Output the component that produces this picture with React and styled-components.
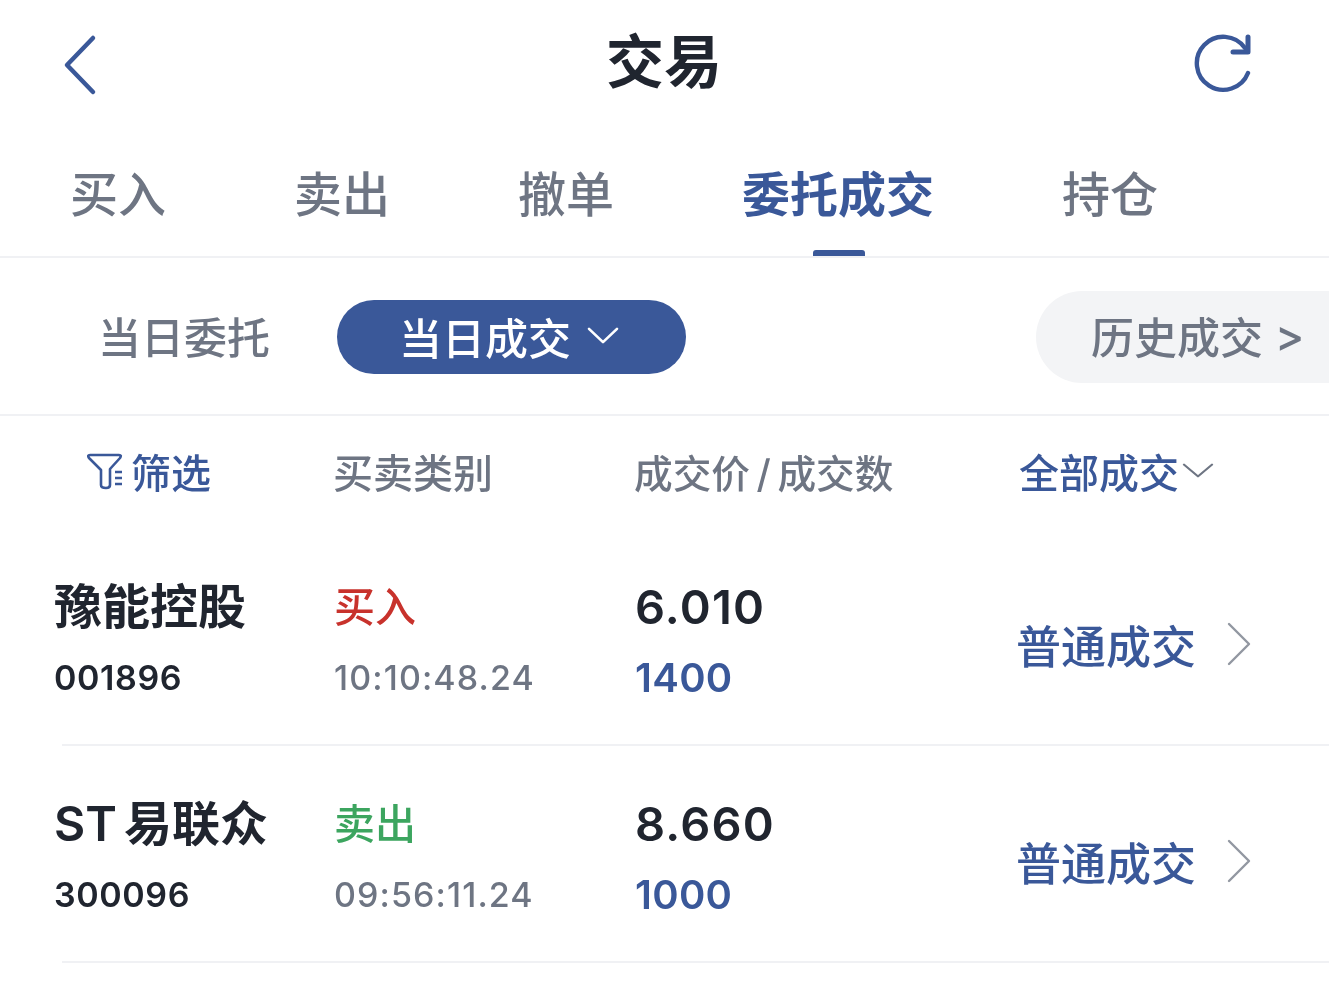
import React from 'react';

// Styled Components
import styled, { createGlobalStyle } from 'styled-components';

const BLUE = '#3a5899';
const DARK = '#20252f';
const GRAY = '#6e7583';

const trades = [
    { name: '豫能控股', code: '001896', side: '买入', buy: true, time: '10:10:48.24', price: '6.010', qty: '1400', kind: '普通成交' },
    { name: 'ST 易联众', code: '300096', side: '卖出', buy: false, time: '09:56:11.24', price: '8.660', qty: '1000', kind: '普通成交' },
];

const tabs = ['买入', '卖出', '撤单', '委托成交', '持仓'];

const Chevron = ({ size = 32, height = 18, color = 'currentColor', width = 3 }) => (
    <svg width={size} height={height} viewBox="0 0 32 18" fill="none" preserveAspectRatio="none">
        <path d="M2 2 L16 16 L30 2" stroke={color} strokeWidth={width} strokeLinecap="round" strokeLinejoin="round" />
    </svg>
);

const App = () => {
    return (
        <Page>
            <GlobalStyle />
            <NavBar>
                <svg width="36" height="62" viewBox="0 0 36 62" fill="none">
                    <path d="M31 4 L5 31 L31 58" stroke={BLUE} strokeWidth="4.5" strokeLinecap="round" strokeLinejoin="round" />
                </svg>
                <Title>交易</Title>
                <RefreshIcon width="60" height="62" viewBox="0 0 60 62" fill="none">
                    <path d="M55 41 A26.5 26.5 0 1 1 52 16" stroke={BLUE} strokeWidth="4.4" strokeLinecap="round" />
                    <path d="M55 5 V20 H40" stroke={BLUE} strokeWidth="5" strokeLinecap="round" strokeLinejoin="round" />
                </RefreshIcon>
            </NavBar>

            <TabBar>
                {tabs.map((tab) => (
                    <Tab key={tab} $active={tab === '委托成交'}>{tab}</Tab>
                ))}
            </TabBar>

            <SubBar>
                <SubLabel>当日委托</SubLabel>
                <ActivePill>
                    当日成交
                    <Chevron size={32} height={17} color="#fff" width={2.6} />
                </ActivePill>
                <HistoryPill>
                    历史成交<Arrow>&gt;</Arrow>
                </HistoryPill>
            </SubBar>

            <HeaderRow>
                <FilterCell>
                    <svg width="38" height="38" viewBox="0 0 38 38" fill="none">
                        <path d="M3 3 H32 Q35 3 33 6 L23 17 V33 Q23 36 19 36 Q14 36 14 33 V18 L2 6 Q0 3 3 3 Z" stroke={BLUE} strokeWidth="2.6" strokeLinejoin="round" />
                        <path d="M28 20 H35 M28 26 H35 M28 32 H35" stroke={BLUE} strokeWidth="2.4" />
                    </svg>
                    筛选
                </FilterCell>
                <HeadCell>买卖类别</HeadCell>
                <PriceHead>成交价<Slash>/</Slash>成交数</PriceHead>
                <AllCell>
                    全部成交
                    <Chevron size={32} height={15} color={GRAY} width={2.4} />
                </AllCell>
            </HeaderRow>

            {trades.map((t) => (
                <TradeRow key={t.code}>
                    <Cell>
                        <StockName>{t.name}</StockName>
                        <StockCode>{t.code}</StockCode>
                    </Cell>
                    <Cell>
                        <Side $buy={t.buy}>{t.side}</Side>
                        <Time>{t.time}</Time>
                    </Cell>
                    <Cell>
                        <Price>{t.price}</Price>
                        <Qty>{t.qty}</Qty>
                    </Cell>
                    <KindCell>
                        <Kind>{t.kind}</Kind>
                        <svg width="28" height="44" viewBox="0 0 28 44" fill="none">
                            <path d="M5 2 L25 22 L5 42" stroke="#9297a1" strokeWidth="2.4" strokeLinecap="round" strokeLinejoin="round" />
                        </svg>
                    </KindCell>
                </TradeRow>
            ))}
        </Page>
    );
};

const GlobalStyle = createGlobalStyle`
  html, body {
    margin: 0;
    padding: 0;
    background: #fff;
  }

  body {
    font-family: Inter, "Noto Sans CJK SC", sans-serif;
    overflow: hidden;
  }
`;

const Page = styled.div`
  width: 1329px;
  height: 996px;
  overflow: hidden;
  background: #fff;
  filter: blur(0.5px);
`;

const NavBar = styled.div`
  height: 130px;
  display: flex;
  align-items: center;
  justify-content: space-between;
  padding: 0 76px 0 62px;
  box-sizing: border-box;
`;

const RefreshIcon = styled.svg`
  margin-top: -4px;
`;

const Title = styled.div`
  font-size: 58px;
  font-weight: 600;
  color: ${DARK};
  line-height: 1;
  margin: -6px 0 0 37px;
`;

const TabBar = styled.div`
  height: 128px;
  box-sizing: border-box;
  display: flex;
  gap: 128px;
  padding: 39px 0 0 70px;
  border-bottom: 2px solid #f0f1f4;
`;

const Tab = styled.div`
  position: relative;
  height: 87px;
  font-size: 48px;
  line-height: 52px;
  font-weight: ${(p) => (p.$active ? 600 : 500)};
  color: ${(p) => (p.$active ? BLUE : GRAY)};

  &::after {
    content: '';
    display: ${(p) => (p.$active ? 'block' : 'none')};
    position: absolute;
    left: 71px;
    bottom: 0;
    width: 52px;
    height: 6px;
    border-radius: 3px 3px 0 0;
    background: ${BLUE};
  }
`;

const SubBar = styled.div`
  height: 158px;
  box-sizing: border-box;
  display: flex;
  align-items: center;
  padding: 1px 0 0 98px;
  border-bottom: 2px solid #f0f1f4;
`;

const SubLabel = styled.div`
  font-size: 43px;
  font-weight: 500;
  color: ${GRAY};
  width: 239px;
  margin-bottom: 4px;
`;

const ActivePill = styled.div`
  width: 349px;
  height: 74px;
  box-sizing: border-box;
  display: flex;
  align-items: center;
  gap: 16px;
  padding: 0 0 2px 62px;
  border-radius: 37px;
  background: ${BLUE};
  color: #fff;
  font-size: 43px;
  font-weight: 500;
`;

const HistoryPill = styled.div`
  margin-left: auto;
  width: 293px;
  height: 92px;
  box-sizing: border-box;
  display: flex;
  align-items: center;
  padding: 0 0 3px 55px;
  border-radius: 46px 0 0 46px;
  background: #f3f4f6;
  color: ${GRAY};
  font-size: 43px;
  font-weight: 500;
`;

const Arrow = styled.span`
  margin-left: 12px;
  font-size: 44px;
`;

const HeaderRow = styled.div`
  height: 113px;
  box-sizing: border-box;
  display: grid;
  grid-template-columns: 279px 301px 383px 1fr;
  align-items: center;
  padding: 0 0 4px 54px;
`;

const HeadCell = styled.div`
  font-size: 40px;
  font-weight: 500;
  color: ${GRAY};
  white-space: nowrap;
`;

const PriceHead = styled(HeadCell)`
  font-size: 38.7px;
`;

const Slash = styled.span`
  margin: 0 6.5px;
`;

const FilterCell = styled(HeadCell)`
  display: flex;
  align-items: center;
  gap: 6px;
  padding-left: 33px;
  color: ${BLUE};
`;

const AllCell = styled(HeadCell)`
  display: flex;
  align-items: center;
  margin-left: 2px;
  gap: 3px;
  color: ${BLUE};
`;

const TradeRow = styled.div`
  height: 217px;
  box-sizing: border-box;
  display: grid;
  grid-template-columns: 280px 301px 381px 1fr;
  align-items: center;
  padding-left: 54px;
  position: relative;

  &::after {
    content: '';
    position: absolute;
    left: 62px;
    right: 0;
    bottom: 0;
    height: 2px;
    background: #f0f1f4;
  }
`;

const Cell = styled.div`
  display: flex;
  flex-direction: column;
  gap: 22px;
  margin-top: 1px;
`;

const StockName = styled.div`
  font-size: 48px;
  line-height: 58px;
  font-weight: 600;
  color: ${DARK};
  white-space: nowrap;
  word-spacing: -5px;
`;

const StockCode = styled.div`
  font-size: 34px;
  line-height: 40px;
  font-weight: 600;
  letter-spacing: 0.6px;
  color: ${DARK};
`;

const Side = styled.div`
  font-size: 41px;
  line-height: 58px;
  font-weight: 500;
  color: ${(p) => (p.$buy ? '#c8322c' : '#3ca55f')};
`;

const Time = styled.div`
  font-size: 34px;
  line-height: 40px;
  font-weight: 500;
  letter-spacing: 1.1px;
  color: ${GRAY};
`;

const Price = styled.div`
  font-size: 47px;
  line-height: 58px;
  font-weight: 600;
  letter-spacing: 1.2px;
  color: ${DARK};
`;

const Qty = styled.div`
  font-size: 40px;
  line-height: 40px;
  font-weight: 600;
  letter-spacing: 0.3px;
  color: ${BLUE};
`;

const KindCell = styled.div`
  display: flex;
  align-items: center;
  gap: 28px;
  margin-top: 13px;
`;

const Kind = styled.div`
  font-size: 45px;
  font-weight: 500;
  color: ${BLUE};
  white-space: nowrap;
`;

export default App;
